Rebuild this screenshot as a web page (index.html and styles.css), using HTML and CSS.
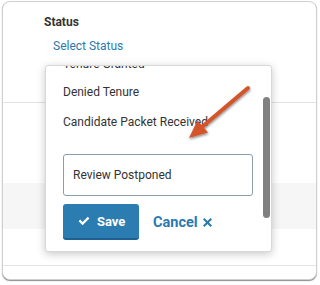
FILE: index.html
```html
<!DOCTYPE html>
<html>
<head>
<meta charset="utf-8">
<link rel="stylesheet" href="styles.css">
</head>
<body>
<div class="card">
  <div class="head">
    <div class="label">Status</div>
    <a class="select">Select Status</a>
  </div>
  <div class="row r1"></div>
  <div class="row r2"></div>
  <div class="row r3"></div>
  <div class="row r4"></div>

  <div class="popup">
    <ul class="list">
      <li>Tenure Granted</li>
      <li>Denied Tenure</li>
      <li>Candidate Packet Received</li>
    </ul>
    <div class="field">Review Postponed</div>
    <div class="actions">
      <button class="save">
        <svg class="check" viewBox="0 0 12 10" width="12" height="10"><path d="M0.6 5.2 L2.2 3.6 L4.6 6 L9.8 0.8 L11.4 2.4 L4.6 9.2 Z" fill="#fff"/></svg>
        <span>Save</span>
      </button>
      <a class="cancel">Cancel
        <svg class="times" viewBox="0 0 10 10" width="9" height="9"><path d="M1.6 0 L5 3.4 L8.4 0 L10 1.6 L6.6 5 L10 8.4 L8.4 10 L5 6.6 L1.6 10 L0 8.4 L3.4 5 L0 1.6 Z" fill="#2a7ab0"/></svg>
      </a>
    </div>
    <div class="thumb"></div>
  </div>
</div>
<svg class="arrow" width="320" height="285" viewBox="0 0 320 285">
  <defs>
    <filter id="sh" x="-20%" y="-20%" width="140%" height="140%">
      <feDropShadow dx="0.5" dy="1.5" stdDeviation="1.2" flood-color="#000" flood-opacity="0.45"/>
    </filter>
  </defs>
  <g filter="url(#sh)">
    <line x1="248" y1="88" x2="202" y2="127" stroke="#d4552a" stroke-width="4" stroke-linecap="round"/>
    <path d="M189 138 L208 132.4 L197.5 120.2 Z" fill="#d4552a"/>
  </g>
</svg>
</body>
</html>
```

FILE: styles.css
```css
* { box-sizing: border-box; }
html, body { margin: 0; padding: 0; background: #fff; }
body {
  width: 320px;
  height: 285px;
  overflow: hidden;
  font-family: Roboto, "Liberation Sans", sans-serif;
  position: relative;
}
.card {
  position: relative;
  margin: 1px 3px 0 2px;
  border: 1px solid #d0d0d0;
  border-radius: 8px;
  box-shadow: 0 1px 1px rgba(0,0,0,0.45);
  background: #fff;
}
.head {
  height: 101px;
  border-bottom: 1px solid #e2e2e2;
  padding: 12px 0 0 41px;
}
.label {
  font-size: 12px;
  font-weight: 700;
  color: #333;
  line-height: 16px;
}
.select {
  display: block;
  margin-top: 8px;
  margin-left: 9px;
  font-size: 12px;
  color: #2a7ab0;
  line-height: 16px;
}
.row { background: #fff; }
.r1 { height: 80px; }
.r2 { height: 46px; background: #f6f6f6; }
.r3 { height: 37px; border-bottom: 1px solid #e4e4e4; }
.r4 { height: 13px; border-radius: 0 0 8px 8px; }

.popup {
  position: absolute;
  left: 42px;
  top: 63px;
  width: 227px;
  height: 187px;
  background: #fff;
  border: 1px solid #d8d8d8;
  border-radius: 3px;
  box-shadow: 0 2px 8px rgba(0,0,0,0.22);
  overflow: hidden;
  padding: 0 0 0 17px;
}
.list {
  list-style: none;
  margin: -15px 0 0 0;
  padding: 0;
}
.list li {
  height: 30px;
  line-height: 30px;
  font-size: 12px;
  color: #333;
}
.list li:first-child {
  height: 26px;
  line-height: 26px;
}
.field {
  margin-top: 17px;
  width: 190px;
  height: 42px;
  border: 1px solid #8d9db0;
  border-radius: 3px;
  padding-left: 9px;
  line-height: 40px;
  font-size: 12px;
  color: #333;
}
.actions {
  margin-top: 8px;
  display: flex;
  align-items: center;
}
.save {
  width: 76px;
  height: 36px;
  border: none;
  border-bottom: 2px solid #1f6090;
  border-radius: 3px;
  background: #2a7cb1;
  color: #fff;
  font-family: Roboto, "Liberation Sans", sans-serif;
  font-size: 13px;
  font-weight: 700;
  display: flex;
  align-items: center;
  padding: 0 0 0 15px;
  gap: 7px;
}
.check { display: block; }
.cancel {
  margin-left: 14px;
  font-size: 14.5px;
  font-weight: 700;
  color: #2a7ab0;
  display: flex;
  align-items: center;
  gap: 5px;
}
.times { display: block; }
.thumb {
  position: absolute;
  right: 1px;
  top: 31px;
  width: 7px;
  height: 121px;
  background: #808080;
  border-radius: 3.5px;
}
.arrow {
  position: absolute;
  left: 0;
  top: 0;
  pointer-events: none;
}
```
